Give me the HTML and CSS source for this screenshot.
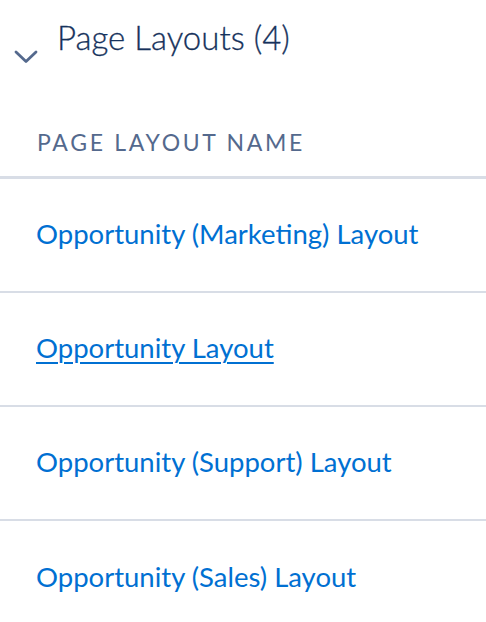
FILE: index.html
```html
<!DOCTYPE html>
<html lang="en">
<head>
<meta charset="utf-8">
<title>Page Layouts</title>
<link rel="stylesheet" href="styles.css">
</head>
<body>
<section class="card">
  <header class="card-header">
    <svg class="chevron" width="24" height="14" viewBox="0 0 24 14" aria-hidden="true">
      <path d="M2 2 L12 11.5 L22 2" fill="none" stroke="#54698d" stroke-width="2.8" stroke-linecap="round" stroke-linejoin="round"/>
    </svg>
    <h2 class="card-title">Page Layouts (4)</h2>
  </header>
  <div class="table">
    <div class="col-head">Page Layout Name</div>
    <div class="row"><a href="#" class="link">Opportunity (Marketing) Layout</a></div>
    <div class="row"><a href="#" class="link link-hover">Opportunity Layout</a></div>
    <div class="row"><a href="#" class="link">Opportunity (Support) Layout</a></div>
    <div class="row"><a href="#" class="link">Opportunity (Sales) Layout</a></div>
  </div>
</section>
</body>
</html>
```

FILE: styles.css
```css
html, body {
  margin: 0;
  padding: 0;
  background: #ffffff;
}

body {
  font-family: Lato, "Open Sans", "Liberation Sans", sans-serif;
}

.card {
  width: 486px;
}

.card-header {
  display: flex;
  align-items: flex-start;
  height: 100px;
  box-sizing: border-box;
  padding: 17px 0 0 14px;
}

.chevron {
  flex: none;
  margin-top: 33px;
}

.card-title {
  margin: 0 0 0 19px;
  font-size: 33px;
  line-height: 40px;
  font-weight: 300;
  color: #16325c;
  -webkit-text-stroke: 0.3px #16325c;
}

.col-head {
  height: 79px;
  box-sizing: border-box;
  padding: 7px 0 0 37px;
  display: flex;
  align-items: center;
  font-size: 23px;
  letter-spacing: 2.7px;
  text-transform: uppercase;
  color: #54698d;
  border-bottom: 3px solid #d8dde6;
}

.row {
  height: 114px;
  box-sizing: border-box;
  display: flex;
  align-items: center;
  padding: 0 0 3px 36px;
  border-bottom: 2px solid #d8dde6;
}

.row:last-child {
  border-bottom: none;
}

.link {
  font-size: 27.5px;
  color: #0070d2;
  text-decoration: none;
}

.link-hover {
  text-decoration: underline;
  text-decoration-thickness: 2px;
  text-underline-offset: 4px;
}
```
